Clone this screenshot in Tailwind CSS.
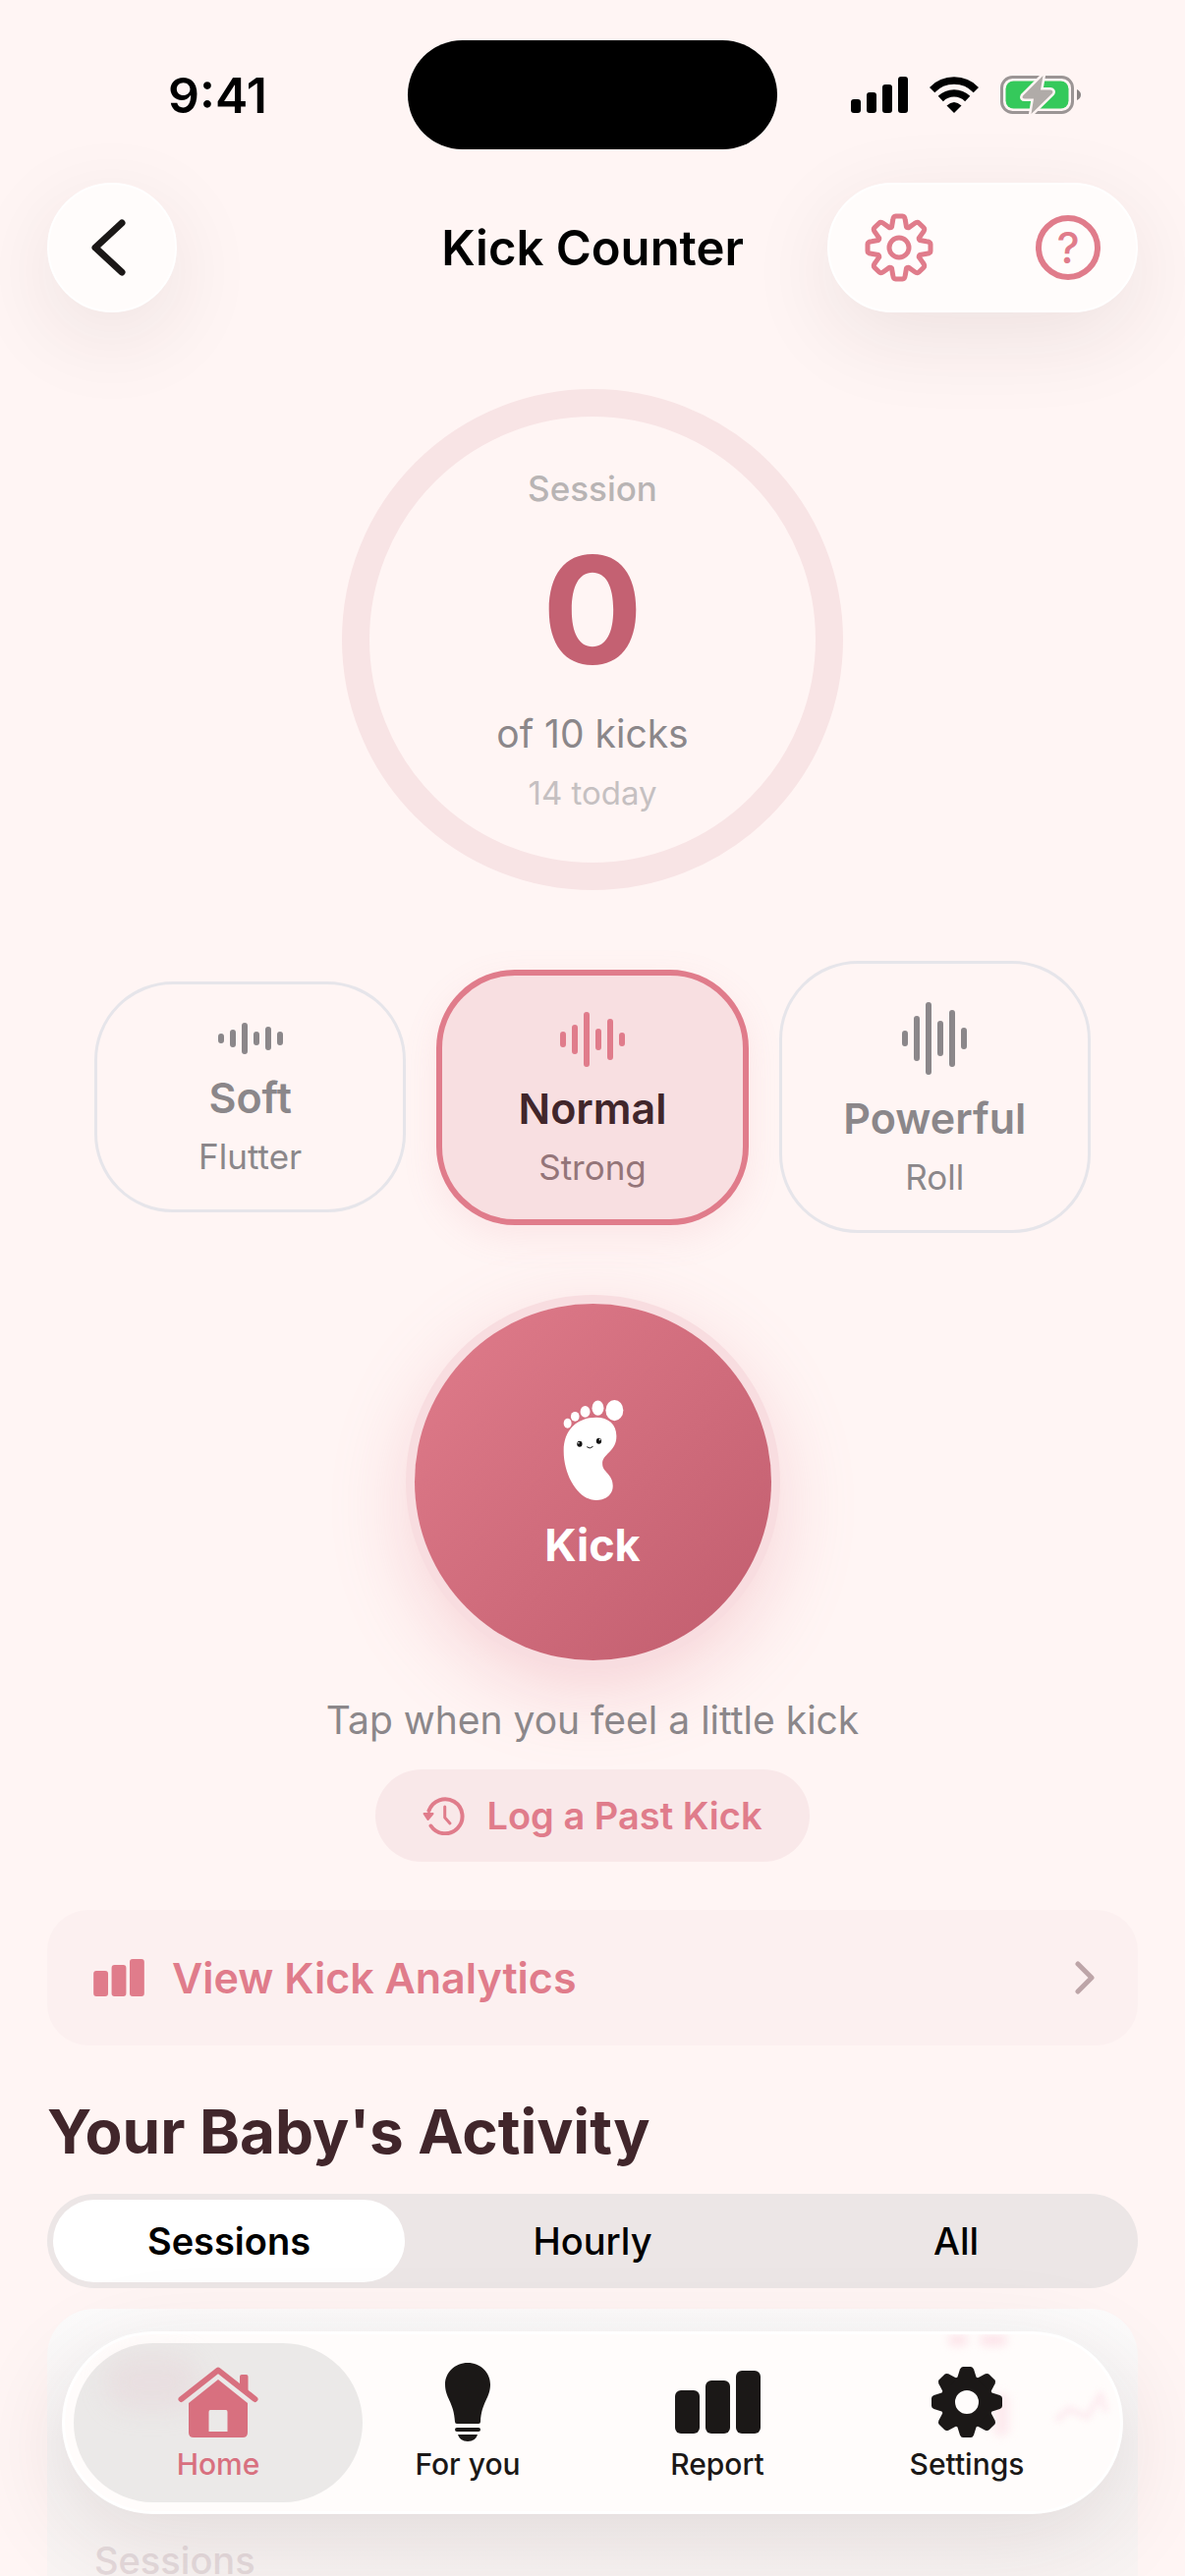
<!DOCTYPE html>
<html lang="en">
<head>
  <meta charset="UTF-8" />
  <meta name="viewport" content="width=device-width, initial-scale=1.0" />
  <title>Kick Counter</title>
  <script src="https://cdn.jsdelivr.net/npm/@tailwindcss/browser@4"></script>
</head>
<body class="bg-[#fff5f4] font-['Inter',sans-serif] text-[#41262b]">
  <div class="relative flex h-screen flex-col overflow-hidden">

    <!-- Status bar -->
    <div class="grid grid-cols-[1fr_376px_1fr] items-center pt-[41px] text-black">
      <div class="pl-7 text-center text-[50px] leading-none font-semibold">9:41</div>
      <div class="h-[111px] rounded-full bg-black"></div>
      <div class="flex items-center justify-center gap-[22px] pr-8">
        <svg class="h-[37px] w-[58px]" viewBox="0 0 58 37" fill="currentColor">
          <rect x="0" y="23" width="10" height="14" rx="3" />
          <rect x="16" y="16" width="10" height="21" rx="3" />
          <rect x="32" y="8" width="10" height="29" rx="3" />
          <rect x="48" y="0" width="10" height="37" rx="3" />
        </svg>
        <svg class="h-[37px] w-[50px]" viewBox="0 0 50 37" fill="none" stroke="currentColor" stroke-width="7.4">
          <path d="M2.6 13.6A31 31 0 0 1 47.4 13.6" />
          <path d="M11.3 22.5A19.5 19.5 0 0 1 38.7 22.5" />
          <path d="M17.5 29.5Q25 22.5 32.5 29.5L25 37Z" fill="currentColor" stroke="none" />
        </svg>
        <svg class="h-[41px] w-[82px]" viewBox="0 0 82 41">
          <rect x="1.5" y="2.5" width="72" height="36" rx="11" fill="none" stroke="#9b9595" stroke-width="3" />
          <rect x="5.5" y="6.5" width="64" height="28" rx="8" fill="#35c95b" />
          <path d="M78 15Q82 17 82 20.500Q82 24 78 26Z" fill="#8a8484" />
          <path d="M43.500 1L23 21.500Q21.500 24.500 25 24.500H34L31.500 40L53 19Q54.500 16 51 15.500H41Z" fill="#b0aba8" stroke="#fff5f4" stroke-width="5" stroke-linejoin="round" paint-order="stroke" />
        </svg>
      </div>
    </div>

    <!-- Header -->
    <header class="mt-[34px] grid grid-cols-[1fr_auto_1fr] items-center px-12">
      <button aria-label="Back" class="flex size-[132px] items-center justify-center rounded-full border-2 border-white bg-[#fffcfb] pr-2 text-[#1b1817] shadow-[0_24px_90px_rgba(60,30,30,0.09)]">
        <svg class="h-[58px] w-[36px]" viewBox="0 0 36 58" fill="none" stroke="currentColor" stroke-width="7" stroke-linecap="round" stroke-linejoin="round">
          <path d="M32 4L5 29L32 54" />
        </svg>
      </button>
      <h1 class="text-[49px] leading-none font-semibold text-black">Kick Counter</h1>
      <div class="flex h-[132px] w-[316px] items-center justify-between justify-self-end rounded-full border-2 border-white bg-[#fffcfb] px-9 text-[#e07c8b] shadow-[0_24px_90px_rgba(60,30,30,0.09)]">
        <button aria-label="Counter settings">
          <svg class="size-[70px]" viewBox="-35 -35 70 70" fill="none" stroke="currentColor" stroke-width="5" stroke-linecap="round" stroke-linejoin="round">
            <defs>
              <path id="tooth-line" d="M-8.500-20.500L-7.500-21L-6.300-28Q-5.800-32-3.500-32H3.500Q5.800-32 6.300-28L7.500-21L8.500-20.500" />
            </defs>
            <circle r="10" />
            <use href="#tooth-line" />
            <use href="#tooth-line" transform="rotate(45)" />
            <use href="#tooth-line" transform="rotate(90)" />
            <use href="#tooth-line" transform="rotate(135)" />
            <use href="#tooth-line" transform="rotate(180)" />
            <use href="#tooth-line" transform="rotate(225)" />
            <use href="#tooth-line" transform="rotate(270)" />
            <use href="#tooth-line" transform="rotate(315)" />
          </svg>
        </button>
        <button aria-label="Help" class="flex size-[66px] items-center justify-center rounded-full border-[6px] border-current text-[44px] leading-none font-medium">?</button>
      </div>
    </header>

    <!-- Session ring -->
    <section class="mt-[78px] flex size-[510px] flex-col items-center self-center rounded-full border-[28px] border-[#f8e4e5] pt-[53px]">
      <p class="text-[35px] leading-[40px] font-medium text-[#b8b4b4]">Session</p>
      <p class="mt-7 text-[152px] leading-[152px] font-bold text-[#c46172]">0</p>
      <p class="mt-[26px] text-[39px] leading-[48px] text-[#8b878a]">of 10 kicks</p>
      <p class="mt-4 text-[33px] leading-[40px] text-[#c5c0c1]">14 today</p>
    </section>

    <!-- Kick strength -->
    <section class="mx-24 mt-[72px] grid grid-cols-3 items-center gap-[31px] text-[#8b878a]">
      <button class="flex flex-col items-center rounded-[80px] border-[3px] border-[#e6e5ea] pt-[39px] pb-[34px]">
        <svg class="h-8 w-[66px]" viewBox="0 -16 66 32" stroke="currentColor" stroke-width="6" stroke-linecap="round">
          <path d="M3-2V2M15-6V6M27-13V13M39-4V4M51-9V9M63-4V4" />
        </svg>
        <span class="mt-[18px] text-[43px] leading-[52px] font-semibold">Soft</span>
        <span class="mt-[14px] text-[35px] leading-[40px]">Flutter</span>
      </button>
      <button class="flex flex-col items-center rounded-[80px] border-[6px] border-[#e07c8b] bg-[#f8dfe1] pt-[37px] pb-[33px] shadow-[0_12px_36px_rgba(224,124,139,0.12)]">
        <svg class="h-14 w-[66px] text-[#e07c8b]" viewBox="0 -28 66 56" stroke="currentColor" stroke-width="6" stroke-linecap="round">
          <path d="M3-5V5M15-12V12M27-25V25M39-8V8M51-18V18M63-4V4" />
        </svg>
        <span class="mt-4 text-[43px] leading-[52px] font-semibold text-[#41262b]">Normal</span>
        <span class="mt-[14px] text-[35px] leading-[40px] text-[#947579]">Strong</span>
      </button>
      <button class="flex flex-col items-center rounded-[80px] border-[3px] border-[#e6e5ea] pt-[39px] pb-[34px]">
        <svg class="h-[74px] w-[66px]" viewBox="0 -37 66 74" stroke="currentColor" stroke-width="6" stroke-linecap="round">
          <path d="M3-5V5M15-20V20M27-34V34M39-15V15M51-26V26M63-8V8" />
        </svg>
        <span class="mt-[18px] text-[43px] leading-[52px] font-semibold">Powerful</span>
        <span class="mt-[14px] text-[35px] leading-[40px]">Roll</span>
      </button>
    </section>

    <!-- Kick button -->
    <button class="mt-[72px] flex size-[363px] shrink-0 flex-col items-center self-center rounded-full bg-linear-to-br from-[#e07c8b] to-[#c15d6e] pt-[97px] text-white shadow-[0_0_0_9px_#f8dde0,0_24px_84px_rgba(224,124,139,0.32)]">
      <svg class="h-[105px] w-[63px]" viewBox="160 70 190 315" fill="#fff">
        <ellipse cx="177" cy="144" rx="12" ry="15" />
        <ellipse cx="200" cy="123" rx="13" ry="15" />
        <ellipse cx="231" cy="108" rx="15" ry="18" />
        <ellipse cx="270" cy="97" rx="18" ry="23" />
        <ellipse cx="321" cy="104" rx="27" ry="32" />
        <path d="M265 126C303 126 327 148 327 183C327 232 284 236 284 268C284 294 316 298 316 336C316 364 292 380 265 380C212 380 165 306 165 228C165 166 205 126 265 126Z" />
        <ellipse cx="214" cy="207" rx="8" ry="9" fill="#111" />
        <circle cx="211" cy="204" r="2.500" />
        <ellipse cx="273" cy="198" rx="8" ry="9" fill="#111" />
        <circle cx="276" cy="194" r="2.500" />
        <path d="M236 216Q245 224 255 215" fill="none" stroke="#111" stroke-width="3" />
      </svg>
      <span class="mt-[18px] text-[45px] leading-[52px] font-bold">Kick</span>
    </button>

    <p class="mt-[37px] text-center text-[39px] leading-[48px] text-[#8b878a]">Tap when you feel a little kick</p>

    <button class="mt-[26px] flex h-[94px] items-center gap-[22px] self-center rounded-full bg-[#f9e8e9] px-12 text-[#e07c8b]">
      <svg class="h-[40px] w-[43px]" viewBox="0 0 43 40" fill="none" stroke="currentColor" stroke-width="4" stroke-linecap="round" stroke-linejoin="round">
        <path d="M6.500 15A17.500 17.500 0 1 1 8.500 30.500" />
        <path d="M1.500 18H10.500L5.500 24Z" fill="currentColor" stroke-width="2" />
        <path d="M22.700 11V22L28 28" stroke-width="3" />
      </svg>
      <span class="text-[38px] leading-[48px] font-semibold">Log a Past Kick</span>
    </button>

    <a href="#analytics" class="mx-12 mt-[49px] flex h-[138px] items-center rounded-[42px] bg-[#fcf0f0] pr-11 pl-[47px] text-[#e07c8b]">
      <svg class="h-[38px] w-[52px]" viewBox="0 0 87 64" fill="currentColor">
        <rect x="0" y="20" width="25" height="44" rx="5" />
        <rect x="31" y="10" width="25" height="54" rx="5" />
        <rect x="62" y="0" width="25" height="64" rx="5" />
      </svg>
      <span class="ml-7 text-[43px] leading-[52px] font-semibold">View Kick Analytics</span>
      <svg class="ml-auto h-[34px] w-[20px] text-[#bda5a8]" viewBox="0 0 20 34" fill="none" stroke="currentColor" stroke-width="5" stroke-linecap="round" stroke-linejoin="round">
        <path d="M3 3L17 17L3 31" />
      </svg>
    </a>

    <!-- Activity -->
    <h2 class="mx-12 mt-[50px] text-[62px] leading-[76px] font-bold">Your Baby's Activity</h2>

    <div class="mx-12 mt-[25px] grid h-24 shrink-0 grid-cols-3 rounded-full bg-[#ece6e6] text-[38px] leading-[48px] font-medium text-black">
      <button class="m-[6px] rounded-full bg-white font-semibold">Sessions</button>
      <button class="m-[6px] rounded-full">Hourly</button>
      <button class="m-[6px] rounded-full">All</button>
    </div>

    <section class="mx-12 mt-[21px] min-h-0 flex-1 overflow-hidden rounded-t-[48px] bg-linear-to-b from-[#fdfcfc] via-[#f7f4f4] to-[#f9f4f3] px-12">
      <h3 class="pt-[242px] text-[38px] leading-[28px] font-medium text-[#e5dadc]">Sessions</h3>
    </section>

    <!-- Tab bar -->
    <nav class="absolute inset-x-[63px] bottom-[63px] grid h-[186px] grid-cols-4 rounded-full border-[3px] border-white bg-[#fffcfb] px-[29px] text-[30px] leading-[36px] font-medium text-[#1b1817] shadow-[0_24px_100px_rgba(60,30,30,0.12)]">
      <!-- content glowing through the glass -->
      <div aria-hidden="true" class="pointer-events-none absolute inset-0 overflow-hidden rounded-full">
        <div class="absolute top-0 right-[115px] h-3 w-7 rounded-full bg-[#fbcfdb]/50 blur-[4px]"></div>
        <div class="absolute top-0 right-[155px] h-3 w-5 rounded-full bg-[#fbcfdb]/50 blur-[4px]"></div>
        <div class="absolute top-[60px] right-[113px] h-11 w-4 rounded-full bg-[#fbcfdb]/40 blur-[5px]"></div>
        <svg class="absolute top-[58px] right-[12px] h-8 w-[54px] blur-[3px]" viewBox="0 0 54 32" fill="none" stroke="#fdecf0" stroke-width="6" stroke-linecap="round">
          <path d="M3 28L14 18L32 26L46 4L51 18" />
        </svg>
      </div>
      <a href="#home" class="relative -mx-5 my-[9px] flex flex-col items-center rounded-full bg-[#ebe9e8] pt-6 text-[#d8707f]">
        <span aria-hidden="true" class="absolute top-3 left-8 h-14 w-24 rounded-full bg-[#e6c9cf]/30 blur-[12px]"></span>
        <svg class="relative h-[72px] w-[82px]" viewBox="0 0 82 72" fill="currentColor">
          <path d="M3.500 33L41 3.500L78.500 33" fill="none" stroke="currentColor" stroke-width="6" stroke-linecap="round" stroke-linejoin="round" />
          <path d="M63 22V10Q63 8 65 8H69.500Q71.500 8 71.500 10V28Z" />
          <path fill-rule="evenodd" d="M41 13L71 37V67Q71 72 66 72H16Q11 72 11 67V37ZM33 44Q31.500 44 31.500 46V66H50.500V46Q50.500 44 49 44Z" />
        </svg>
        <span class="mt-[9px]">Home</span>
      </a>
      <a href="#for-you" class="relative my-[9px] flex flex-col items-center pt-5">
        <svg class="h-[80px] w-[46px]" viewBox="0 0 46 80" fill="currentColor">
          <path d="M23 0C36 0 46 10 46 22C46 36 37 40 36 60Q36 62 34 62H12Q10 62 10 60C9 40 0 36 0 22C0 10 10 0 23 0Z" />
          <rect x="10" y="66" width="26" height="4" rx="2" />
          <path d="M13 73H33Q31 80 23 80Q15 80 13 73Z" />
        </svg>
        <span class="mt-[5px]">For you</span>
      </a>
      <a href="#report" class="relative my-[9px] flex flex-col items-center pt-7">
        <svg class="h-16 w-[87px]" viewBox="0 0 87 64" fill="currentColor">
          <rect x="0" y="20" width="25" height="44" rx="6" />
          <rect x="31" y="10" width="25" height="54" rx="6" />
          <rect x="62" y="0" width="25" height="64" rx="6" />
        </svg>
        <span class="mt-[13px]">Report</span>
      </a>
      <a href="#settings" class="relative my-[9px] flex flex-col items-center pt-6">
        <svg class="size-[72px]" viewBox="-36 -36 72 72" fill="currentColor">
          <defs>
            <path id="tooth-solid" d="M-10-24L-7-33.500Q-6-36-4-36H4Q6-36 7-33.500L10-24Z" />
          </defs>
          <circle r="19.500" fill="none" stroke="currentColor" stroke-width="15" />
          <use href="#tooth-solid" />
          <use href="#tooth-solid" transform="rotate(45)" />
          <use href="#tooth-solid" transform="rotate(90)" />
          <use href="#tooth-solid" transform="rotate(135)" />
          <use href="#tooth-solid" transform="rotate(180)" />
          <use href="#tooth-solid" transform="rotate(225)" />
          <use href="#tooth-solid" transform="rotate(270)" />
          <use href="#tooth-solid" transform="rotate(315)" />
        </svg>
        <span class="mt-[9px]">Settings</span>
      </a>
    </nav>
  </div>
</body>
</html>
